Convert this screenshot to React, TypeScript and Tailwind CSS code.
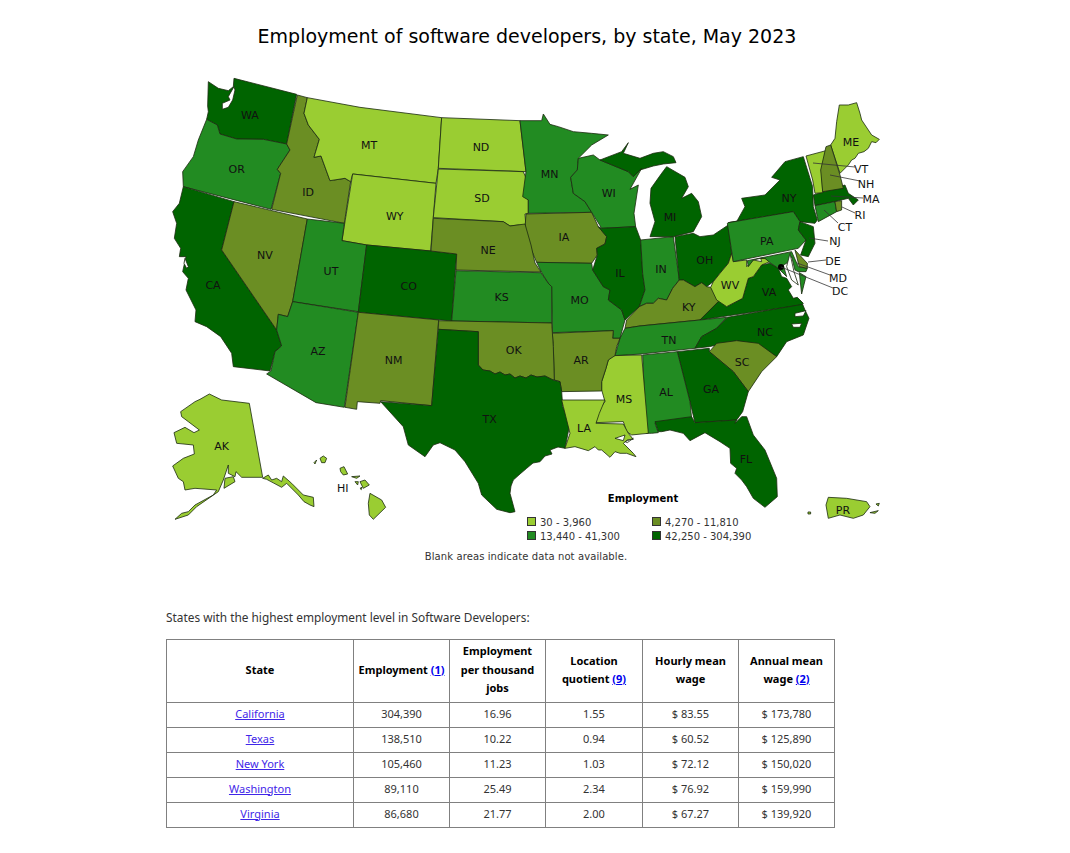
import React from 'react';

const LIGHT = '#9acd32';
const OLIVE = '#6b8e23';
const MID = '#228b22';
const DARK = '#006400';

type Shape = [string, string];

// outlines traced per crop of the map, each group has its own origin (scale 1/3)
const west: Shape[] = [
  [DARK, '145,35 175,55 205,62 220,50 222,25 410,73 380,222 310,208 230,207 180,192 172,165 140,148 145,125 143,108'],
  [MID, '140,148 172,165 180,192 230,207 310,208 380,222 390,240 352,298 362,310 333,418 70,350 68,305 100,260 115,210'],
  [DARK, '70,350 222,395 185,540 350,780 365,828 345,845 330,903 220,890 215,850 182,800 140,770 105,755 108,720 78,660 85,625 68,605 78,560 58,560 62,535 43,505 50,460 38,425 58,400'],
  [OLIVE, '222,395 442,447 398,695 383,740 355,733 350,780 185,540'],
  [OLIVE, '412,75 442,83 432,130 445,165 478,208 462,262 483,258 510,332 555,325 572,335 553,460 335,418 362,310 352,298 390,240 380,222'],
  [LIGHT, '442,83 600,112 845,143 835,295 828,340 578,312 572,335 555,325 510,332 483,258 462,262 478,208 445,165 432,130'],
  [LIGHT, '578,312 828,340 812,543 620,525 546,512'],
  [MID, '442,447 553,460 546,512 620,525 595,725 398,695'],
  [DARK, '620,525 812,543 890,552 875,753 595,727'],
  [MID, '398,695 595,727 553,1012 468,998 320,912 333,903 345,845 365,828 350,780 355,733 383,740'],
  [OLIVE, '595,727 836,750 815,1007 662,992 660,1000 592,995 590,1018 555,1012'],
  [LIGHT, '845,143 1080,152 1098,305 835,295'],
  [LIGHT, '835,297 1090,305 1105,340 1105,430 1095,432 1098,468 1075,465 1050,468 1030,455 820,443'],
  ['#ffffff', '222,50 205,80 210,90 187,100 187,118 205,112 218,90 225,60'],
  ['#ffffff', '75,565 85,590 80,595 72,580'],
];

// the Red River, shared by Oklahoma and Texas
const redRiver = '478.3,365 483,370 490,371 495,374 500,372 505,375 510,374 515,378 520,376 526,378 531,375 537,377 545,376 553,380';

// these cross two crops, so they are in page coordinates
const middle: Shape[] = [
  [OLIVE, '433.3,218.3 503.3,221.7 510,226 525,224 531,245 535,263 541,272 456,270 456.7,254 431,251'],
  [MID, '456,270.7 541,272.7 548,283 551.7,286.7 551.7,323 451.7,321'],
  [OLIVE, `438.7,320.7 551.7,323 553.3,346.7 554.3,380 ${redRiver.split(' ').reverse().join(' ')} 478.3,331.7 438.3,329.3`],
  [DARK, `438.3,329.3 478.3,331.7 ${redRiver} 560,381.7 561.7,391.7 562.7,406.7 570,423.3 566.7,440 565,448.3 558,447 550,450 552,454 545,456 540,461.7 533,463 526.7,468.3 520,474 513.3,480 511,486 510,493.3 515,511.7 510,512.7 496.7,509.3 481.7,495 478.3,483.3 465,461.7 455,450 440,442.7 433.3,445 425,456.7 408.3,445 403.3,426.7 380.7,401.7 431.7,405.7`],
];

const east: Shape[] = [
  [MID, '0,92 65,92 70,72 90,103 115,110 160,125 215,130 265,135 215,165 175,205 172,240 152,262 160,310 195,335 215,367 25,370 25,330 8,320 18,245'],
  [OLIVE, '18,372 215,367 235,410 260,440 255,462 230,475 232,495 215,520 50,517 30,470 15,415'],
  [MID, '50,517 215,520 218,540 250,590 270,600 265,630 305,660 315,690 300,745 278,745 280,722 97,728 95,590 85,580 65,548'],
  [MID, '175,205 220,195 240,210 325,245 340,260 365,235 330,298 355,285 342,370 347,410 245,415 215,367 195,335 160,310 152,262 172,240'],
  [DARK, '245,415 347,410 362,450 368,550 375,600 358,650 315,690 305,660 265,630 270,600 250,590 218,540 232,495 230,475 255,462 260,440 235,410'],
  [MID, '362,450 460,440 478,570 458,595 440,630 415,625 400,640 380,640 358,650 375,600 368,550'],
  [DARK, '390,440 405,395 390,340 393,295 425,250 440,230 495,262 505,290 485,325 515,310 535,335 545,380 520,425 460,440'],
  [DARK, '240,210 305,185 325,158 310,190 360,205 400,190 430,185 460,200 468,218 430,222 400,228 360,240 365,235 340,260 325,245'],
  [DARK, '465,440 520,430 540,440 580,435 625,405 635,490 625,520 600,550 580,575 560,590 545,578 525,590 490,570 478,572'],
  [OLIVE, '315,715 320,690 358,650 380,640 400,640 415,625 440,630 458,595 478,570 490,570 525,590 545,578 560,590 572,592 600,630 540,690 360,708'],
  [DARK, '540,690 600,630 620,650 668,625 685,565 700,560 725,525 750,520 775,535 785,560 800,565 815,590 805,600 820,625 832,622 850,640 845,645'],
  [LIGHT, '635,490 640,515 680,510 680,530 700,510 725,515 722,505 735,505 750,515 725,525 700,560 685,565 668,625 620,650 590,630 572,592 580,575 600,550 625,520'],
  [MID, '285,797 300,745 315,715 360,708 540,690 620,682 590,715 545,740 525,775 365,792'],
  [DARK, '525,775 545,740 590,715 622,682 848,643 855,660 867,685 850,735 800,755 770,800 715,765 650,752 590,765 568,770'],
  [OLIVE, '568,785 590,760 650,752 715,760 770,800 725,845 685,905 640,845'],
  [DARK, '472,785 568,775 568,785 640,845 685,905 668,965 650,990 525,998 510,935'],
  [MID, '368,795 472,785 510,935 515,985 405,1000 415,1028 395,1030 378,1030'],
  [LIGHT, '280,797 365,795 385,1030 335,1035 320,1025 310,995 228,998 232,965 240,955 255,935 245,900 245,875 258,835 265,810'],
  [OLIVE, '97,730 280,722 278,745 300,745 290,770 285,797 265,810 258,835 245,875 245,903 125,905 120,875 103,870 100,770'],
  [DARK, '650,395 675,350 665,325 735,315 780,270 755,262 795,215 850,200 878,290 880,350 892,390 885,400 840,395 820,365 625,398'],
  [MID, '625,398 820,365 840,395 835,420 858,450 835,475 640,515 622,400'],
  [DARK, '840,395 880,410 885,460 865,500 842,495 858,450 835,420'],
  [DARK, '880,315 975,285 985,310 1015,330 1000,345 985,325 955,332 885,347'],
  [MID, '885,347 945,335 950,365 895,395 892,380'],
  [OLIVE, '945,335 965,332 965,360 950,365'],
  [MID, '682,512 815,485 835,530 862,535 858,545 835,545 825,540 815,500 800,520 790,525 800,560 775,535 750,518 735,505 722,505 700,510 685,530'],
  [OLIVE, '825,480 862,520 862,535 838,530'],
  [MID, '838,548 858,560 845,612'],
  ['#ffffff', '810,490 822,545 835,585 815,570 800,530'],
  ['#ffffff', '825,670 858,662 850,678 825,680'],
  ['#ffffff', '815,702 845,700 840,712 820,712'],
];

// Maine and northern New England, from the closer crop
const northeast: Shape[] = [
  [LIGHT, '272,135 285,115 290,65 298,15 325,15 350,8 360,40 365,60 385,90 395,105 418,118 408,128 395,125 385,145 372,155 355,160 345,175 335,180 325,195 300,220'],
  [LIGHT, '198,168 258,152 245,210 248,278 225,280 218,240'],
  [OLIVE, '258,140 272,135 300,225 310,265 248,275 242,210'],
];

const south: Shape[] = [
  [LIGHT, '125,0 255,0 238,40 228,70 310,72 325,100 340,118 322,120 310,130 340,160 348,170 320,160 300,160 285,155 270,172 245,150 235,150 225,140 205,152 165,140 135,145 150,100'],
  [DARK, '405,65 515,50 525,68 650,60 645,70 665,50 680,50 700,105 735,150 770,235 772,290 735,322 700,295 680,260 665,240 645,220 650,205 632,190 630,145 600,125 555,98 510,122 490,100 450,90 425,95 415,95'],
  [LIGHT, '925,292 980,295 1040,305 1050,320 1030,345 1000,355 960,345 925,355 918,315'],
  [LIGHT, '1050,338 1075,332 1065,340'],
  [LIGHT, '1068,312 1078,310 1075,318'],
  [LIGHT, '864,336 872,336 872,342 864,342'],
  ['#ffffff', '285,115 315,105 310,122'],
  ['#ffffff', '315,125 340,115 322,128'],
];

const islands: Shape[] = [
  [LIGHT, '62,95 105,65 120,58 148,42 185,60 268,70 308,292 245,292 228,275 225,290 205,280 205,255 190,300 175,335 110,380 85,405 45,418 65,400 85,395 105,375 160,345 170,330 105,325 75,330 70,305 55,295 38,258 70,235 103,222 100,195 50,190 42,158 75,142 102,158 118,150 85,125 65,110'],
  [LIGHT, '308,295 325,285 335,300 350,295 365,305 370,288 395,310 430,345 460,352 462,380 450,375 432,365 415,345 380,310 365,322 320,298'],
  [LIGHT, '195,295 220,290 225,305 192,325'],
  [LIGHT, '462,248 470,240 465,252'],
  [LIGHT, '480,235 490,228 500,235 495,248 485,248'],
  [LIGHT, '540,265 552,260 563,282 550,285 542,275'],
  [LIGHT, '575,290 600,288 590,295'],
  [LIGHT, '585,305 595,305 593,315'],
  [LIGHT, '600,305 615,300 628,315 610,325'],
  [LIGHT, '600,325 606,322 604,329'],
  [LIGHT, '630,340 665,360 677,382 640,418 628,405 625,370'],
];

const labels: [string, number, number][] = [
  ['WA', 250, 115], ['OR', 236.7, 169], ['ID', 308, 192], ['MT', 369, 145], ['ND', 481, 147], ['SD', 482, 198],
  ['WY', 394.7, 216], ['NV', 265, 255], ['UT', 331, 271], ['CO', 408.7, 286], ['CA', 213, 285], ['NE', 488, 250],
  ['KS', 501.7, 297], ['AZ', 318, 351], ['NM', 393.7, 360], ['OK', 513.7, 350], ['TX', 489.7, 419], ['MN', 549.7, 174],
  ['IA', 564, 237], ['MO', 579.5, 300], ['WI', 608.7, 193], ['IL', 620, 273], ['IN', 661, 269], ['MI', 670, 217],
  ['OH', 704.7, 260], ['KY', 688.7, 307], ['WV', 730, 285], ['VA', 769, 292], ['PA', 766.7, 241], ['NY', 789, 197.5],
  ['ME', 851, 142], ['TN', 669, 340], ['NC', 765, 332], ['SC', 742, 362], ['GA', 711, 389], ['AL', 666, 392],
  ['MS', 624, 399], ['LA', 584, 428], ['AR', 581, 360], ['FL', 746, 459], ['AK', 221.7, 446], ['HI', 342.7, 488],
  ['PR', 843, 510], ['VT', 861, 169], ['NH', 866, 184], ['MA', 871, 199], ['RI', 860, 215], ['CT', 845, 227],
  ['NJ', 835, 241], ['DE', 833, 261], ['MD', 838, 278], ['DC', 840, 291],
];

const leaders = [
  [813, 163, 855, 167], [830, 175, 860, 181], [831, 196, 863, 198], [842, 207, 855, 213],
  [824, 210, 838, 223], [809, 238, 828, 241], [808, 262, 826, 260], [797, 263, 830, 275], [781, 267, 833, 288],
];

const legend: [string, string, number, number][] = [
  [LIGHT, '30 - 3,960', 527.5, 517.5],
  [OLIVE, '4,270 - 11,810', 652.5, 517.5],
  [MID, '13,440 - 41,300', 527.5, 531.5],
  [DARK, '42,250 - 304,390', 652.5, 531.5],
];

const rows = [
  ['California', '304,390', '16.96', '1.55', '$ 83.55', '$ 173,780'],
  ['Texas', '138,510', '10.22', '0.94', '$ 60.52', '$ 125,890'],
  ['New York', '105,460', '11.23', '1.03', '$ 72.12', '$ 150,020'],
  ['Washington', '89,110', '25.49', '2.34', '$ 76.92', '$ 159,990'],
  ['Virginia', '86,680', '21.77', '2.00', '$ 67.27', '$ 139,920'],
];

const Shapes = ({ items, x, y }: { items: Shape[]; x: number; y: number }) => (
  <g transform={`translate(${x} ${y}) scale(0.3333)`}>
    {items.map((s, i) => (
      <polygon
        key={i}
        points={s[1]}
        fill={s[0]}
        stroke="#1c2a10"
        strokeOpacity={0.8}
        strokeWidth={1}
        strokeLinejoin="round"
        vectorEffect="non-scaling-stroke"
      />
    ))}
  </g>
);

const Note = ({ n }: { n: number }) => (
  <a href="#" className="text-[#0000ee] underline">({n})</a>
);

const Head = ({ children, w }: { children: React.ReactNode; w: string }) => (
  <th className={`${w} border border-[#808080] px-[2px] pb-[2px] text-center font-bold text-black`}>{children}</th>
);

const App: React.FC = () => {
  return (
    <div className="min-h-[853px] bg-white pl-[166px] font-['Noto_Sans',sans-serif]">
      <div className="w-[722px]">
        <h1 className="pt-[22px] pb-[20px] text-center font-['DejaVu_Sans',sans-serif] text-[19px] leading-[28px] text-black">
          Employment of software developers, by state, May 2023
        </h1>

        {/* Map */}
        <svg width={722} height={500} viewBox="166 70 722 500" className="block font-['DejaVu_Sans',sans-serif]">
          <Shapes items={west} x={160} y={70} />
          <Shapes items={east} x={520} y={90} />
          <g>
            {middle.map((s, i) => (
              <polygon key={i} points={s[1]} fill={s[0]} stroke="#1c2a10" strokeOpacity={0.8} strokeWidth={1} strokeLinejoin="round" />
            ))}
          </g>
          <Shapes items={south} x={520} y={400} />
          <Shapes items={northeast} x={740} y={100} />
          <Shapes items={islands} x={160} y={380} />
          <circle cx={781} cy={267} r={3} fill="#000000" />
          {leaders.map((l, i) => (
            <line key={i} x1={l[0]} y1={l[1]} x2={l[2]} y2={l[3]} stroke="#333333" strokeWidth={0.8} />
          ))}
          {labels.map(([name, x, y]) => (
            <text key={name} x={x} y={y + 4} textAnchor="middle" className="fill-[#111111] text-[11px]">
              {name}
            </text>
          ))}
          <text x={643} y={502} textAnchor="middle" className="fill-black text-[10px] font-bold">Employment</text>
          {legend.map(([fill, text, x, y]) => (
            <g key={text}>
              <rect x={x} y={y} width={8} height={8} fill={fill} stroke="#333333" strokeWidth={1} />
              <text x={x + 12.5} y={y + 8} className="fill-[#333333] text-[10px]">{text}</text>
            </g>
          ))}
          <text x={526} y={560} textAnchor="middle" className="fill-[#333333] text-[10px] tracking-[0.1px]">
            Blank areas indicate data not available.
          </text>
        </svg>
      </div>

      <p className="pt-[38px] pb-[12px] text-[11.85px] leading-[19px] text-[#333333]">
        States with the highest employment level in Software Developers:
      </p>

      <table className="w-[669px] table-fixed border-collapse text-[11px] leading-[18.5px] text-[#333333]">
        <thead>
          <tr className="h-[63px]">
            <Head w="w-[187px]">State</Head>
            <Head w="w-[96px]">Employment <Note n={1} /></Head>
            <Head w="w-[96px]">Employment<br />per thousand<br />jobs</Head>
            <Head w="w-[97px]">Location<br />quotient <Note n={9} /></Head>
            <Head w="w-[96px]">Hourly mean<br />wage</Head>
            <Head w="w-[96px]">Annual mean<br />wage <Note n={2} /></Head>
          </tr>
        </thead>
        <tbody>
          {rows.map((row) => (
            <tr key={row[0]} className="h-[25px]">
              <td className="border border-[#808080] pb-[2px] text-center">
                <a href="#" className="text-[#3f26e8] underline">{row[0]}</a>
              </td>
              {row.slice(1).map((cell, i) => (
                <td key={i} className="border border-[#808080] pb-[2px] text-center">{cell}</td>
              ))}
            </tr>
          ))}
        </tbody>
      </table>
    </div>
  );
};

export default App;
